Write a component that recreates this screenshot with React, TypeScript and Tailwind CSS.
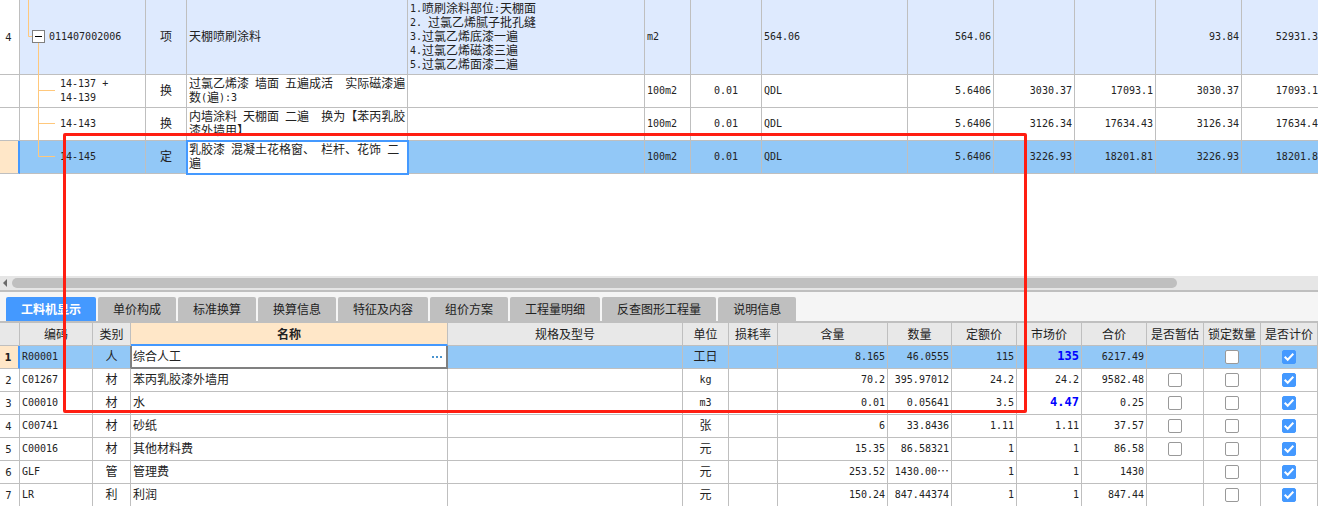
import React, { useState } from 'react';
import clsx from 'clsx';

type QuotaRow = {
  no: string;
  code: string;
  type: string;
  name: string;
  feature: string;
  values: string[];
  kind: 'item' | 'quota';
  last?: boolean;
};

type Material = {
  code: string;
  type: string;
  name: string;
  unit: string;
  content: string;
  amount: string;
  quotaPrice: string;
  marketPrice: string;
  adjusted?: boolean;
  total: string;
  estimate?: boolean;
};

const quotaRows: QuotaRow[] = [
  {
    no: '4',
    code: '011407002006',
    type: '项',
    name: '天棚喷刷涂料',
    feature:
      '1.喷刷涂料部位:天棚面\n2. 过氯乙烯腻子批孔缝\n3.过氯乙烯底漆一遍\n4.过氯乙烯磁漆三遍\n5.过氯乙烯面漆二遍',
    values: ['m2', '', '564.06', '564.06', '', '', '93.84', '52931.3'],
    kind: 'item',
  },
  {
    no: '',
    code: '14-137 +\n14-139',
    type: '换',
    name: '过氯乙烯漆 墙面 五遍成活  实际磁漆遍\n数(遍):3',
    feature: '',
    values: ['100m2', '0.01', 'QDL', '5.6406', '3030.37', '17093.1', '3030.37', '17093.1'],
    kind: 'quota',
  },
  {
    no: '',
    code: '14-143',
    type: '换',
    name: '内墙涂料 天棚面 二遍  换为【苯丙乳胶\n漆外墙用】',
    feature: '',
    values: ['100m2', '0.01', 'QDL', '5.6406', '3126.34', '17634.43', '3126.34', '17634.4'],
    kind: 'quota',
  },
  {
    no: '',
    code: '14-145',
    type: '定',
    name: '乳胶漆 混凝土花格窗、 栏杆、花饰 二\n遍',
    feature: '',
    values: ['100m2', '0.01', 'QDL', '5.6406', '3226.93', '18201.81', '3226.93', '18201.8'],
    kind: 'quota',
    last: true,
  },
];

const valueAlign = [
  'text-left',
  'text-center',
  'text-left',
  'text-right',
  'text-right',
  'text-right',
  'text-right',
  'text-right',
];

const tabs = [
  '工料机显示',
  '单价构成',
  '标准换算',
  '换算信息',
  '特征及内容',
  '组价方案',
  '工程量明细',
  '反查图形工程量',
  '说明信息',
];

const columns = [
  '',
  '编码',
  '类别',
  '名称',
  '规格及型号',
  '单位',
  '损耗率',
  '含量',
  '数量',
  '定额价',
  '市场价',
  '合价',
  '是否暂估',
  '锁定数量',
  '是否计价',
];

const materials: Material[] = [
  { code: 'R00001', type: '人', name: '综合人工', unit: '工日', content: '8.165', amount: '46.0555', quotaPrice: '115', marketPrice: '135', adjusted: true, total: '6217.49' },
  { code: 'C01267', type: '材', name: '苯丙乳胶漆外墙用', unit: 'kg', content: '70.2', amount: '395.97012', quotaPrice: '24.2', marketPrice: '24.2', total: '9582.48', estimate: true },
  { code: 'C00010', type: '材', name: '水', unit: 'm3', content: '0.01', amount: '0.05641', quotaPrice: '3.5', marketPrice: '4.47', adjusted: true, total: '0.25', estimate: true },
  { code: 'C00741', type: '材', name: '砂纸', unit: '张', content: '6', amount: '33.8436', quotaPrice: '1.11', marketPrice: '1.11', total: '37.57', estimate: true },
  { code: 'C00016', type: '材', name: '其他材料费', unit: '元', content: '15.35', amount: '86.58321', quotaPrice: '1', marketPrice: '1', total: '86.58', estimate: true },
  { code: 'GLF', type: '管', name: '管理费', unit: '元', content: '253.52', amount: '1430.00…', quotaPrice: '1', marketPrice: '1', total: '1430' },
  { code: 'LR', type: '利', name: '利润', unit: '元', content: '150.24', amount: '847.44374', quotaPrice: '1', marketPrice: '1', total: '847.44' },
];

// Latin runs are set half as wide as the Chinese characters
const Mixed: React.FC<{ text: string }> = ({ text }) => (
  <>
    {text.split(/([\x20-\x7e]+)/).map((part, i) =>
      i % 2 === 1 ? (
        <span
          key={i}
          className="align-[1px] font-['DejaVu_Sans_Mono',monospace] text-[10px] leading-none"
        >
          {part}
        </span>
      ) : (
        part
      ),
    )}
  </>
);

const CodeCell: React.FC<{ row: QuotaRow }> = ({ row }) => {
  if (row.kind === 'item') {
    return (
      <div className="flex h-[74px]">
        <svg width="12" height="74" className="shrink-0" fill="none" stroke="#ffc87c">
          <path d="M8.5 0V36.5H12" />
        </svg>
        <div className="flex w-[13px] shrink-0 flex-col items-center pt-[30px]">
          <button
            type="button"
            aria-label="折叠"
            className="flex size-[13px] shrink-0 items-center justify-center border border-[#808080] bg-white"
          >
            <span className="h-px w-[7px] bg-black" />
          </button>
          <span className="-mb-px w-px flex-1 bg-[#ffc87c]" />
        </div>
        <span className="self-center pb-0.5 pl-1">
          <Mixed text={row.code} />
        </span>
      </div>
    );
  }
  return (
    <div className="flex h-8">
      <svg width="40" height="32" className="shrink-0 overflow-visible" fill="none" stroke="#ffc87c">
        <path d={row.last ? 'M18.5 0V15.5H35' : 'M18.5 0V33M18.5 15.5H35'} />
      </svg>
      <span className="self-center pb-0.5">
        <Mixed text={row.code} />
      </span>
    </div>
  );
};

const Check: React.FC<{ label: string; checked?: boolean }> = ({ label, checked = false }) => {
  const [on, setOn] = useState(checked);
  return (
    <label className="mx-auto grid size-[14px] place-items-center">
      <input
        type="checkbox"
        aria-label={label}
        checked={on}
        onChange={() => setOn(!on)}
        className="col-start-1 row-start-1 size-[14px] appearance-none rounded-xs border border-[#999999] bg-white checked:border-[#4499ff] checked:bg-[#4499ff]"
      />
      {on && (
        <svg viewBox="0 0 14 14" className="pointer-events-none col-start-1 row-start-1 size-[14px]" fill="none" stroke="white" strokeWidth="2">
          <path d="M2.7 6.8L5.7 9.8L11.3 3.8" />
        </svg>
      )}
    </label>
  );
};

const cell = 'border-r border-b border-[#bfbfbf]';
const textCell = 'border-r border-b border-[#bfbfbf] overflow-hidden px-0.5 pb-0.5';

const QuotaTable: React.FC = () => (
  <table className="w-full min-w-[1200px] table-fixed border-separate border-spacing-0">
    <colgroup>
      <col className="w-5" />
      <col className="w-[126px]" />
      <col className="w-[41px]" />
      <col className="w-[221px]" />
      <col />
      <col className="w-[46px]" />
      <col className="w-[71px]" />
      <col className="w-[146px]" />
      <col className="w-[86px]" />
      <col className="w-[81px]" />
      <col className="w-[81px]" />
      <col className="w-[86px]" />
      <col className="w-[76px]" />
    </colgroup>
    <tbody>
      {quotaRows.map((row) => (
        <tr
          key={row.code}
          className={clsx(row.kind === 'item' && 'bg-[#deeafe]', row.last && 'bg-[#92c8f7]')}
        >
          <th
            className={clsx(
              "border-b border-[#bfbfbf] pt-0.5 pr-0.5 font-['DejaVu_Sans',sans-serif] text-[10px] font-normal",
              row.last ? 'border-r-2 border-r-[#4499ff] bg-[#ffe7c8]' : 'border-r bg-white',
            )}
          >
            {row.no}
          </th>
          <td className={cell}>
            <CodeCell row={row} />
          </td>
          <td className={clsx(textCell, 'text-center')}>{row.type}</td>
          <td
            className={clsx(
              textCell,
              row.last && 'bg-white outline-2 -outline-offset-1 outline-[#4499ff]',
            )}
          >
            <Mixed text={row.name} />
          </td>
          <td className={textCell}>
            <Mixed text={row.feature} />
          </td>
          {row.values.map((value, i) => (
            <td
              key={i}
              className={clsx(
                valueAlign[i],
                i < 7 ? textCell : 'overflow-hidden border-b border-[#bfbfbf] pb-0.5',
              )}
            >
              <Mixed text={value} />
            </td>
          ))}
        </tr>
      ))}
    </tbody>
  </table>
);

const MaterialTable: React.FC = () => (
  <table className="w-full min-w-[1200px] table-fixed border-separate border-spacing-0">
    <colgroup>
      <col className="w-5" />
      <col className="w-[73px]" />
      <col className="w-[38px]" />
      <col className="w-[317px]" />
      <col />
      <col className="w-[46px]" />
      <col className="w-[49px]" />
      <col className="w-[110px]" />
      <col className="w-16" />
      <col className="w-[65px]" />
      <col className="w-[65px]" />
      <col className="w-[65px]" />
      <col className="w-[57px]" />
      <col className="w-[57px]" />
      <col className="w-[57px]" />
    </colgroup>
    <thead>
      <tr className="h-[23px]">
        {columns.map((title, i) => (
          <th
            key={i}
            className={clsx(
              'border-r border-[#bfbfbf]',
              title === '名称'
                ? 'border-b-2 border-b-[#4499ff] bg-[#ffe7c8] font-bold'
                : 'border-b bg-[#e8e8e8] font-normal',
            )}
          >
            {title}
          </th>
        ))}
      </tr>
    </thead>
    <tbody>
      {materials.map((m, i) => {
        const selected = i === 0;
        return (
          <tr key={m.code} className={clsx('h-[23px]', selected && 'bg-[#92c8f7]')}>
            <th
              className={clsx(
                "border-b border-[#bfbfbf] pt-0.5 pr-0.5 font-['DejaVu_Sans',sans-serif] text-[10px]",
                selected
                  ? 'border-r-2 border-r-[#4499ff] bg-[#ffe7c8] font-bold'
                  : 'border-r bg-white font-normal',
              )}
            >
              {i + 1}
            </th>
            <td className={textCell}>
              <Mixed text={m.code} />
            </td>
            <td className={clsx(textCell, 'text-center', selected && 'border-r-[#808080]')}>
              {m.type}
            </td>
            {selected ? (
              <td className="border-r-2 border-b-2 border-l border-[#808080] bg-white">
                <div className="flex items-center pr-1 pl-px">
                  <input
                    aria-label="名称"
                    defaultValue={m.name}
                    className="h-4 min-w-0 flex-1 bg-transparent pb-0.5 outline-none"
                  />
                  <button type="button" aria-label="选择" className="flex gap-0.5">
                    <span className="size-0.5 bg-[#4a94cf]" />
                    <span className="size-0.5 bg-[#4a94cf]" />
                    <span className="size-0.5 bg-[#4a94cf]" />
                  </button>
                </div>
              </td>
            ) : (
              <td className={textCell}>{m.name}</td>
            )}
            <td className={cell} />
            <td className={clsx(textCell, 'text-center')}>
              <Mixed text={m.unit} />
            </td>
            <td className={cell} />
            <td className={clsx(textCell, 'text-right')}>
              <Mixed text={m.content} />
            </td>
            <td className={clsx(textCell, 'text-right')}>
              <Mixed text={m.amount} />
            </td>
            <td className={clsx(textCell, 'text-right')}>
              <Mixed text={m.quotaPrice} />
            </td>
            <td className={clsx(textCell, 'text-right')}>
              {m.adjusted ? (
                <span className="align-[1px] font-['DejaVu_Sans_Mono',monospace] text-xs leading-none font-bold text-[#0000ff]">
                  {m.marketPrice}
                </span>
              ) : (
                <Mixed text={m.marketPrice} />
              )}
            </td>
            <td className={clsx(textCell, 'text-right')}>
              <Mixed text={m.total} />
            </td>
            <td className={cell}>{m.estimate && <Check label="是否暂估" />}</td>
            <td className={cell}>
              <Check label="锁定数量" />
            </td>
            <td className={cell}>
              <Check label="是否计价" checked />
            </td>
          </tr>
        );
      })}
    </tbody>
  </table>
);

const App: React.FC = () => {
  const [active, setActive] = useState(0);

  return (
    <div className="relative h-screen overflow-hidden bg-white font-['Noto_Sans_CJK_SC',sans-serif] text-xs/[14px] whitespace-pre text-[#222222]">
      <section className="pb-[102px]">
        <QuotaTable />
      </section>

      <div className="flex h-4 items-center border-b-2 border-[#bfbfbf] bg-[#e6e6e6] pl-[3px]">
        <svg width="4" height="8" className="mr-[5px] shrink-0" fill="#6b6b6b">
          <path d="M4 0V8L0 4Z" />
        </svg>
        <div className="h-[10px] w-[88.6%] rounded-full bg-[#bfbfbf]" />
      </div>

      <section>
        <div role="tablist" className="flex gap-0.5 border-b-2 border-[#bfbfbf] bg-[#f5f5f5] pt-[5px] pl-1.5">
          {tabs.map((tab, i) => (
            <button
              key={tab}
              type="button"
              role="tab"
              aria-selected={i === active}
              onClick={() => setActive(i)}
              className={clsx(
                'h-6 rounded-t-xs px-[15px]',
                i === active ? 'bg-[#4499ff] font-bold text-white' : 'bg-[#bfbfbf]',
              )}
            >
              {tab}
            </button>
          ))}
        </div>
        <MaterialTable />
      </section>

      <div className="pointer-events-none absolute top-[133px] left-[63px] h-[280px] w-[964px] rounded-xs border-3 border-[#ff1e12]" />
    </div>
  );
};

export default App;
